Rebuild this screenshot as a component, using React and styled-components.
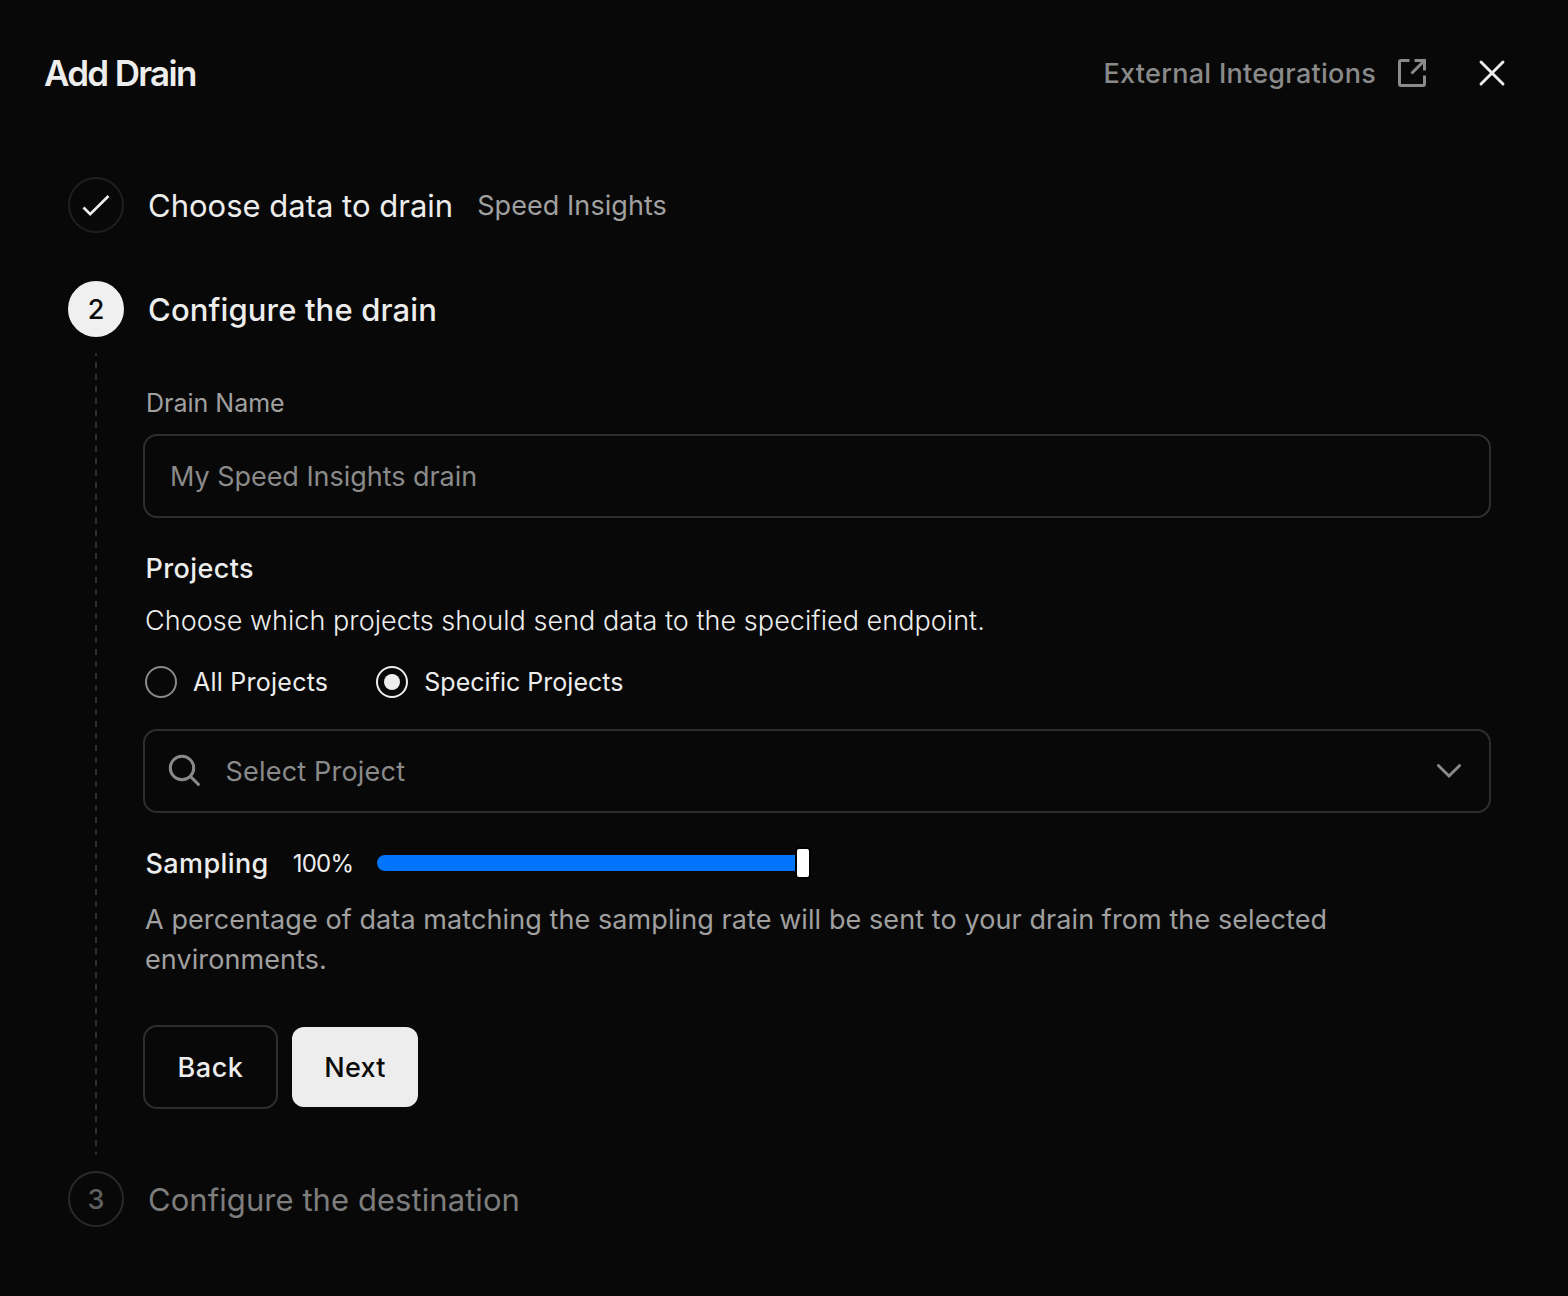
import { useState } from 'react'
import styled, { createGlobalStyle } from 'styled-components'

const colors = {
  background: '#080808',
  text: '#ededed',
  secondary: '#a0a0a0',
  muted: '#8a8a8a',
  border: '#2e2e2e',
  blue: '#0074fb',
}

const GlobalStyle = createGlobalStyle`
  * {
    box-sizing: border-box;
  }
  body {
    margin: 0;
    background: ${colors.background};
    color: ${colors.text};
    font-family: Inter, 'Liberation Sans', sans-serif;
    -webkit-font-smoothing: antialiased;
  }
  button, input {
    font: inherit;
    color: inherit;
  }
`

const Modal = styled.div`
  width: 1568px;
  height: 1296px;
  padding: 49px 45px 0 44px;
  overflow: hidden;
`

const Header = styled.header`
  display: flex;
  align-items: center;
  height: 48px;
`

const Title = styled.h1`
  margin: 0;
  flex: 1;
  font-size: 35px;
  font-weight: 600;
  line-height: 48px;
  letter-spacing: -1.7px;
`

const ExternalLink = styled.a`
  display: flex;
  align-items: center;
  gap: 20px;
  color: ${colors.muted};
  font-size: 27px;
  font-weight: 500;
  letter-spacing: 0.27px;
  white-space: nowrap;
`

const CloseButton = styled.button`
  display: flex;
  margin: 0 15px 0 48px;
  padding: 0;
  border: 0;
  background: none;
`

const Steps = styled.main`
  padding: 80px 32px 0 24px;
`

const StepHeader = styled.div`
  display: flex;
  align-items: center;
  gap: 24px;
  height: 56px;
  margin-bottom: ${({ $spaced }) => ($spaced ? '48px' : '0')};
`

const StepCircle = styled.div`
  display: flex;
  align-items: center;
  justify-content: center;
  width: 56px;
  height: 56px;
  border-radius: 50%;
  border: 2px solid ${({ $active, $done }) => ($active ? '#f0f0f0' : $done ? '#1f1f1f' : '#292929')};
  background: ${({ $active }) => ($active ? '#f0f0f0' : 'transparent')};
  color: ${({ $active }) => ($active ? '#0a0a0a' : '#5f5f5f')};
  font-size: 27px;
  font-weight: 500;
`

const StepTitle = styled.h2`
  margin: 0;
  color: ${({ $disabled }) => ($disabled ? '#7d7d7d' : colors.text)};
  font-size: 31px;
  font-weight: ${({ $active }) => ($active ? 500 : 400)};
  letter-spacing: ${({ $tracking }) => $tracking || '0'};
  white-space: nowrap;
`

const StepHint = styled.span`
  color: ${colors.secondary};
  font-size: 27px;
  letter-spacing: 0.07px;
  white-space: nowrap;
`

const StepBody = styled.div`
  display: flex;
  padding: 16px 0;
`

const Connector = styled.div`
  flex: none;
  width: 2px;
  height: 802px;
  margin: 0 46px 0 27px;
  background: repeating-linear-gradient(
    to bottom,
    ${colors.border} 0 3px,
    transparent 3px 8.97px,
    ${colors.border} 8.97px 11.97px
  );
`

const Form = styled.form`
  flex: 1;
  padding-top: 30px;
`

const Label = styled.label`
  display: block;
  padding-left: 3px;
  height: 40px;
  margin-bottom: 11px;
  color: ${colors.secondary};
  font-size: 25px;
  line-height: 40px;
`

const fieldBox = `
  display: flex;
  align-items: center;
  width: 1348px;
  height: 84px;
  border: 2px solid ${colors.border};
  border-radius: 14px;
  background: transparent;
`

const Input = styled.input`
  ${fieldBox}
  padding: 0 25px;
  font-size: 27px;
  letter-spacing: -0.04px;
  outline: none;

  &::placeholder {
    color: ${colors.muted};
    opacity: 1;
  }
`

const SectionTitle = styled.h3`
  margin: 0;
  padding-left: 2.5px;
  font-size: 27px;
  font-weight: 500;
  line-height: 40px;
  letter-spacing: 0.4px;
`

const Projects = styled.section`
  padding-top: 31px;
`

const Text = styled.p`
  margin: 0;
  padding-left: 2px;
  color: ${({ $secondary }) => ($secondary ? colors.secondary : colors.text)};
  font-size: 27px;
  line-height: 40px;
  letter-spacing: 0.085px;
  white-space: nowrap;
`

const ProjectsText = styled(Text)`
  margin-top: 12px;
  font-weight: 350;
  letter-spacing: 0.04px;
`

const RadioGroup = styled.div`
  display: flex;
  gap: 48px;
  height: 32px;
  margin: 25px 0 31px;
  padding-left: 2px;
`

const RadioLabel = styled.label`
  display: flex;
  align-items: center;
  gap: 16px;
  font-size: 25px;
  letter-spacing: ${({ $tracking }) => $tracking || '0'};
  white-space: nowrap;
`

const Radio = styled.input`
  appearance: none;
  display: grid;
  place-items: center;
  width: 32px;
  height: 32px;
  margin: 0;
  border: 2px solid ${colors.muted};
  border-radius: 50%;

  &:checked {
    border-color: ${colors.text};
  }

  &:checked::before {
    content: '';
    width: 16px;
    height: 16px;
    border-radius: 50%;
    background: ${colors.text};
  }
`

const Select = styled.div`
  ${fieldBox}
  padding: 0 26px 0 23px;
  color: ${colors.muted};
  font-size: 27px;
  letter-spacing: 0.2px;

  span {
    flex: 1;
    padding-left: 23.5px;
  }
`

const Sampling = styled.div`
  display: flex;
  align-items: center;
  height: 40px;
  margin: 30px 0 17px;

  ${SectionTitle} {
    margin-top: 2px;
  }
`

const SamplingValue = styled.output`
  width: 84px;
  padding-left: 24px;
  font-size: 24px;
  line-height: 30px;
  margin-top: 2px;
  letter-spacing: -0.8px;
`

const Slider = styled.div`
  display: flex;
  align-items: center;
  width: 434px;
  margin-left: 24px;
`

const SliderFill = styled.div`
  flex: 1;
  height: 16px;
  border-radius: 8px 0 0 8px;
  background: ${colors.blue};
`

const SliderThumb = styled.div`
  width: 12px;
  height: 28px;
  margin: 0 2px;
  border-radius: 2px;
  background: #fff;
  box-shadow: 0 0 0 2px #000;
`

const Actions = styled.div`
  display: flex;
  align-items: center;
  gap: 14px;
  margin-top: 45px;
`

const Button = styled.button`
  width: ${({ $primary }) => ($primary ? '126px' : '135px')};
  height: ${({ $primary }) => ($primary ? '80px' : '84px')};
  padding: 0;
  border: ${({ $primary }) => ($primary ? '0' : `2px solid ${colors.border}`)};
  border-radius: ${({ $primary }) => ($primary ? '12px' : '14px')};
  background: ${({ $primary }) => ($primary ? colors.text : 'transparent')};
  color: ${({ $primary }) => ($primary ? '#0a0a0a' : colors.text)};
  font-size: 27px;
  font-weight: 500;
  letter-spacing: ${({ $primary }) => ($primary ? '0.3px' : '0.6px')};
`

function ExternalIcon() {
  return (
    <svg width="32" height="32" viewBox="0 0 32 32" fill="none" stroke="currentColor" strokeWidth="3">
      <path d="M13.5 3.5H5A1.5 1.5 0 0 0 3.5 5V27A1.5 1.5 0 0 0 5 28.5H27A1.5 1.5 0 0 0 28.5 27V18.5" />
      <path d="M18.5 3.5H28.5V13.5M28 4L15.5 16.5" />
    </svg>
  )
}

function App() {
  const [scope, setScope] = useState('specific')

  return (
    <>
      <GlobalStyle />
      <Modal>
        <Header>
          <Title>Add Drain</Title>
          <ExternalLink>
            External Integrations
            <ExternalIcon />
          </ExternalLink>
          <CloseButton aria-label="Close">
            <svg width="32" height="32" viewBox="0 0 32 32" fill="none" stroke="currentColor" strokeWidth="2.9">
              <path d="M5 5L27 27M27 5L5 27" strokeLinecap="round" />
            </svg>
          </CloseButton>
        </Header>

        <Steps>
          <StepHeader $spaced>
            <StepCircle $done>
              <svg width="32" height="32" viewBox="0 0 32 32" fill="none" stroke={colors.text} strokeWidth="2.7">
                <path d="M3.5 18.5L10.2 25.2L28.5 7" />
              </svg>
            </StepCircle>
            <StepTitle>Choose data to drain</StepTitle>
            <StepHint>Speed Insights</StepHint>
          </StepHeader>

          <StepHeader>
            <StepCircle $active>2</StepCircle>
            <StepTitle $active $tracking="0.14px">Configure the drain</StepTitle>
          </StepHeader>

          <StepBody>
            <Connector />
            <Form onSubmit={(e) => e.preventDefault()}>
              <Label htmlFor="drain-name">Drain Name</Label>
              <Input id="drain-name" placeholder="My Speed Insights drain" />

              <Projects>
                <SectionTitle>Projects</SectionTitle>
                <ProjectsText>
                  Choose which projects should send data to the specified endpoint.
                </ProjectsText>
                <RadioGroup>
                  <RadioLabel $tracking="0.24px">
                    <Radio
                      type="radio"
                      name="scope"
                      checked={scope === 'all'}
                      onChange={() => setScope('all')}
                    />
                    All Projects
                  </RadioLabel>
                  <RadioLabel $tracking="0.02px">
                    <Radio
                      type="radio"
                      name="scope"
                      checked={scope === 'specific'}
                      onChange={() => setScope('specific')}
                    />
                    Specific Projects
                  </RadioLabel>
                </RadioGroup>
                <Select>
                  <svg width="34" height="34" viewBox="0 0 34 34" fill="none" stroke="currentColor" strokeWidth="3">
                    <circle cx="14" cy="14" r="11.7" />
                    <path d="M22.5 22.5L30.4 30.4" strokeLinecap="round" />
                  </svg>
                  <span>Select Project</span>
                  <svg width="28" height="28" viewBox="0 0 28 28" fill="none" stroke="currentColor" strokeWidth="2.9">
                    <path d="M3.4 8.5L14 19L24.6 8.5" strokeLinecap="round" />
                  </svg>
                </Select>
              </Projects>

              <Sampling>
                <SectionTitle>Sampling</SectionTitle>
                <SamplingValue>100%</SamplingValue>
                <Slider>
                  <SliderFill />
                  <SliderThumb />
                </Slider>
              </Sampling>
              <Text $secondary>
                A percentage of data matching the sampling rate will be sent to your drain from the selected
                <br />
                environments.
              </Text>

              <Actions>
                <Button type="button">Back</Button>
                <Button $primary>Next</Button>
              </Actions>
            </Form>
          </StepBody>

          <StepHeader>
            <StepCircle>3</StepCircle>
            <StepTitle $disabled $tracking="0.06px">Configure the destination</StepTitle>
          </StepHeader>
        </Steps>
      </Modal>
    </>
  )
}

export default App
